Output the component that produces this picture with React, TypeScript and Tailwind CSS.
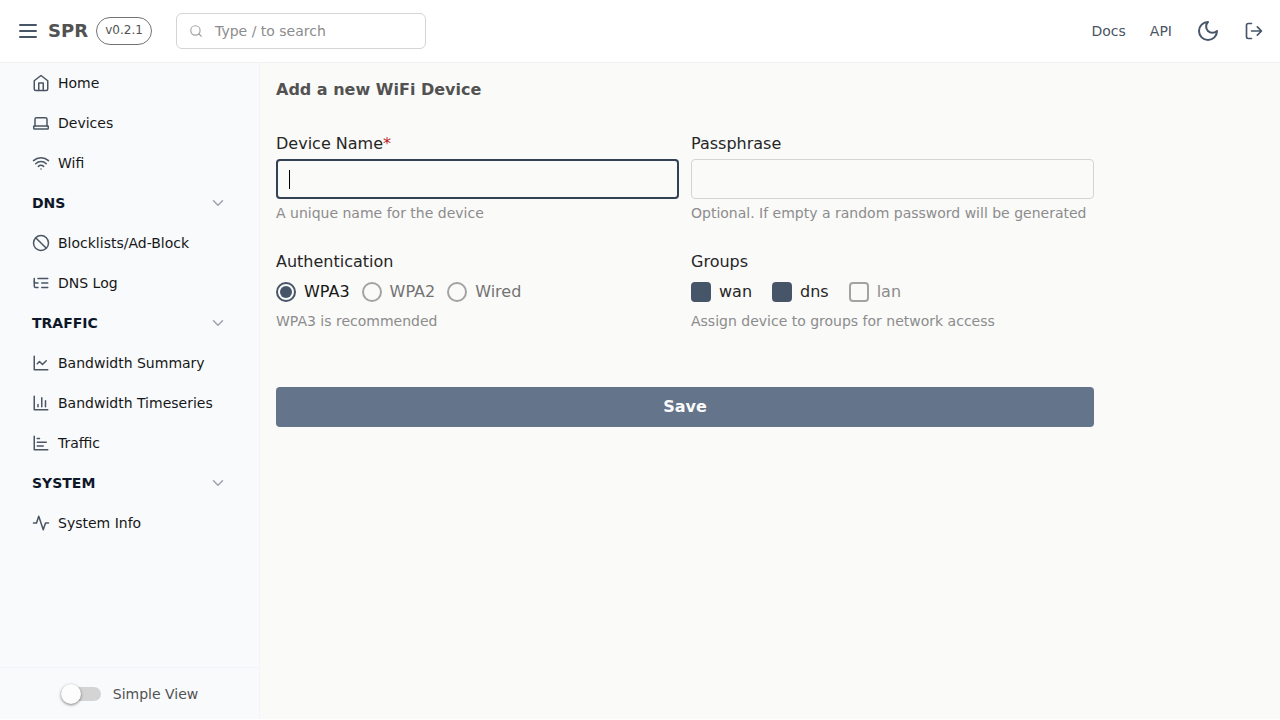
import type { ReactNode } from "react";

function Icon({ className, children }: { className: string; children: ReactNode }) {
  return (
    <svg
      viewBox="0 0 24 24"
      fill="none"
      stroke="currentColor"
      strokeWidth={2}
      strokeLinecap="round"
      strokeLinejoin="round"
      className={`shrink-0 ${className}`}
    >
      {children}
    </svg>
  );
}

type Item = { label: string; icon?: ReactNode };

const items: Item[] = [
  { label: "Home", icon: <><path d="m3 9 9-7 9 7v11a2 2 0 0 1-2 2H5a2 2 0 0 1-2-2z" /><path d="M9 22V12h6v10" /></> },
  {
    label: "Devices",
    icon: <><path d="M4 16V7a2 2 0 0 1 2-2h12a2 2 0 0 1 2 2v9" /><path d="M3 16h18a.7.7 0 0 1 .7.7V19a1 1 0 0 1-1 1H3.3a1 1 0 0 1-1-1v-2.3A.7.7 0 0 1 3 16Z" /></>,
  },
  {
    label: "Wifi",
    icon: <><path d="M5 13a10 10 0 0 1 14 0" /><path d="M8.5 16.5a5 5 0 0 1 7 0" /><path d="M2 8.82a15 15 0 0 1 20 0" /><path d="M12 20h.01" /></>,
  },
  { label: "DNS" },
  { label: "Blocklists/Ad-Block", icon: <><circle cx="12" cy="12" r="10" /><path d="m4.9 4.9 14.2 14.2" /></> },
  {
    label: "DNS Log",
    icon: <><path d="M21 12h-8M21 6H8M21 18h-8" /><path d="M3 6v4c0 1.1.9 2 2 2h3" /><path d="M3 10v6c0 1.1.9 2 2 2h3" /></>,
  },
  { label: "TRAFFIC" },
  { label: "Bandwidth Summary", icon: <><path d="M3 3v18h18" /><path d="m19 9-5 5-4-4-3 3" /></> },
  { label: "Bandwidth Timeseries", icon: <><path d="M3 3v18h18" /><path d="M18 17V9M13 17V5M8 17v-3" /></> },
  { label: "Traffic", icon: <><path d="M3 3v18h18" /><path d="M7 16h8M7 11h12M7 6h3" /></> },
  { label: "SYSTEM" },
  { label: "System Info", icon: <path d="M22 12h-4l-3 9L9 3l-3 9H2" /> },
];

function Header() {
  return (
    <header className="flex h-[63px] shrink-0 items-center border-b border-[#f1f1f1] bg-white px-4">
      <Icon className="size-6 text-[#475569]"><path d="M4 6h16M4 12h16M4 18h16" /></Icon>
      <span className="ml-2 text-lg leading-7 font-bold text-[#525252]">SPR</span>
      <span className="ml-2 flex h-7 w-14 items-center justify-center rounded-full border border-[#737373] pb-0.5 text-xs text-[#525252]">
        v0.2.1
      </span>
      <div className="ml-6 flex h-9 w-[250px] items-center rounded-md border border-[#d4d4d4] pl-3">
        <Icon className="size-[14px] text-[#a3a3a3]"><circle cx="11" cy="11" r="8" /><path d="m21 21-4.3-4.3" /></Icon>
        <span className="ml-3 text-sm text-[#8c8c8c]">Type / to search</span>
      </div>
      <nav className="ml-auto flex items-center text-sm text-[#4b5563]">
        <span>Docs</span>
        <span className="ml-6">API</span>
        <Icon className="ml-6 size-6 text-[#475569]"><path d="M12 3a6 6 0 0 0 9 9 9 9 0 1 1-9-9Z" /></Icon>
        <Icon className="ml-6 size-5 text-[#475569]"><path d="M9 21H5a2 2 0 0 1-2-2V5a2 2 0 0 1 2-2h4" /><path d="m16 17 5-5-5-5M21 12H9" /></Icon>
      </nav>
    </header>
  );
}

function Sidebar() {
  return (
    <aside className="flex w-[260px] shrink-0 flex-col border-r border-[#f1f5f9] bg-[#f8fafc]">
      <ul className="flex-1 pr-8 pl-8">
        {items.map(({ label, icon }) =>
          icon ? (
            <li key={label} className="flex h-10 items-center gap-2 text-sm text-[#171717]">
              <Icon className="size-[18px] text-[#4b5563]">{icon}</Icon>
              {label}
            </li>
          ) : (
            <li key={label} className="flex h-10 items-center justify-between text-sm font-bold text-[#0f172a]">
              {label}
              <Icon className="size-[18px] text-[#9ca3af]"><path d="m6 9 6 6 6-6" /></Icon>
            </li>
          ),
        )}
      </ul>
      <div className="flex h-[52px] items-center justify-center border-t border-[#f1f5f9]">
        <div className="flex h-5 w-10 items-center">
          <span className="flex h-3.5 w-full items-center rounded-full bg-[#d4d4d4]">
            <span className="size-5 shrink-0 rounded-full bg-[#fdfdfd] shadow-[0_1px_3px_rgba(0,0,0,0.5)]" />
          </span>
        </div>
        <span className="ml-3 text-sm text-[#525252]">Simple View</span>
      </div>
    </aside>
  );
}

function Field({ label, required, hint, children }: { label: string; required?: boolean; hint: string; children: ReactNode }) {
  return (
    <div className="flex flex-col">
      <div className="mb-[3px] text-base leading-6 text-[#262626]">
        {label}
        {required && <span className="text-[#b91c1c]">*</span>}
      </div>
      {children}
      <div className="mt-1 text-sm leading-[21px] text-[#8c8c8c]">{hint}</div>
    </div>
  );
}

function Radio({ label, checked }: { label: string; checked?: boolean }) {
  return (
    <div className="flex items-center gap-2">
      <span className={`flex size-5 items-center justify-center rounded-full border-2 ${checked ? "border-[#475569]" : "border-[#a3a3a3]"}`}>
        {checked && <span className="size-3 rounded-full bg-[#475569]" />}
      </span>
      <span className={checked ? "text-[#171717]" : "text-[#737373]"}>{label}</span>
    </div>
  );
}

function Check({ label, checked }: { label: string; checked?: boolean }) {
  return (
    <div className="flex items-center gap-2">
      <span className={`size-5 rounded border-2 ${checked ? "border-[#475569] bg-[#475569]" : "border-[#a3a3a3]"}`} />
      <span className={checked ? "text-[#262626]" : "text-[#8c8c8c]"}>{label}</span>
    </div>
  );
}

export default function App() {
  return (
    <div className="flex h-[719px] flex-col overflow-hidden font-['DejaVu_Sans',sans-serif]">
      <Header />
      <div className="flex min-h-0 flex-1">
        <Sidebar />
        <main className="flex-1 bg-[#fafaf9] px-4 pt-[15px]">
          <h1 className="text-base leading-6 font-bold text-[#525252]">Add a new WiFi Device</h1>
          <form className="mt-[30px] w-[818px]">
            <div className="grid grid-cols-2 gap-x-3 gap-y-[26px]">
              <Field label="Device Name" required hint="A unique name for the device">
                <div className="flex h-10 items-center rounded border-2 border-[#334155] pl-[11px]">
                  <span className="h-[19px] w-px bg-black" />
                </div>
              </Field>
              <Field label="Passphrase" hint="Optional. If empty a random password will be generated">
                <div className="h-10 rounded border border-[#d4d4d4]" />
              </Field>
              <Field label="Authentication" hint="WPA3 is recommended">
                <div className="flex h-[30px] items-center gap-3">
                  <Radio label="WPA3" checked />
                  <Radio label="WPA2" />
                  <Radio label="Wired" />
                </div>
              </Field>
              <Field label="Groups" hint="Assign device to groups for network access">
                <div className="flex h-[30px] items-center gap-5">
                  <Check label="wan" checked />
                  <Check label="dns" checked />
                  <Check label="lan" />
                </div>
              </Field>
            </div>
            <button type="button" className="mt-[55px] flex h-10 w-full items-center justify-center rounded-sm bg-[#64748b] text-base font-bold text-[#fafafa]">
              Save
            </button>
          </form>
        </main>
      </div>
    </div>
  );
}
